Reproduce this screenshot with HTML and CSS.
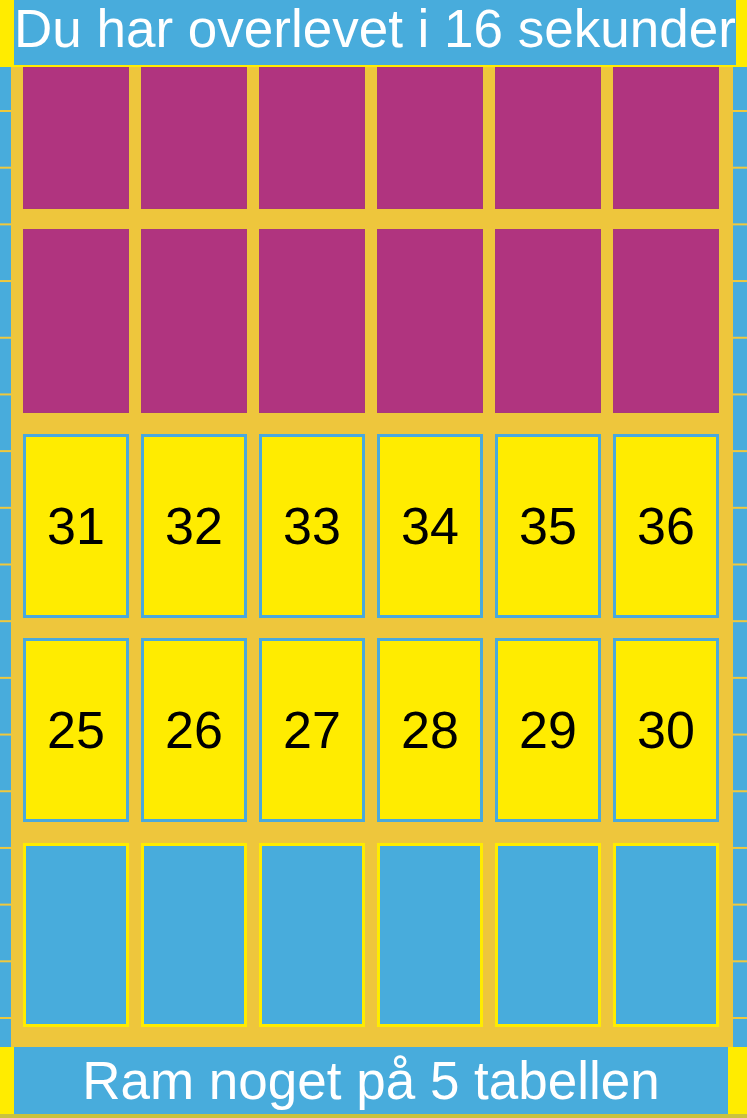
FILE: index.html
```html
<!DOCTYPE html>
<html lang="da">
<head>
<meta charset="utf-8">
<title>Tabel spil</title>
<link rel="stylesheet" href="styles.css">
</head>
<body>
<div class="page">
  <header class="bar bar-top">
    <div class="edge edge-left"></div>
    <div class="bar-body"><span class="bar-text">Du har overlevet i 16 sekunder</span></div>
    <div class="edge edge-right"></div>
  </header>
  <main class="middle">
    <div class="side"></div>
    <div class="board">
      <div class="cell cell-hidden"></div>
      <div class="cell cell-hidden"></div>
      <div class="cell cell-hidden"></div>
      <div class="cell cell-hidden"></div>
      <div class="cell cell-hidden"></div>
      <div class="cell cell-hidden"></div>

      <div class="cell cell-hidden"></div>
      <div class="cell cell-hidden"></div>
      <div class="cell cell-hidden"></div>
      <div class="cell cell-hidden"></div>
      <div class="cell cell-hidden"></div>
      <div class="cell cell-hidden"></div>

      <div class="cell cell-num">31</div>
      <div class="cell cell-num">32</div>
      <div class="cell cell-num">33</div>
      <div class="cell cell-num">34</div>
      <div class="cell cell-num">35</div>
      <div class="cell cell-num">36</div>

      <div class="cell cell-num">25</div>
      <div class="cell cell-num">26</div>
      <div class="cell cell-num">27</div>
      <div class="cell cell-num">28</div>
      <div class="cell cell-num">29</div>
      <div class="cell cell-num">30</div>

      <div class="cell cell-blue"></div>
      <div class="cell cell-blue"></div>
      <div class="cell cell-blue"></div>
      <div class="cell cell-blue"></div>
      <div class="cell cell-blue"></div>
      <div class="cell cell-blue"></div>
    </div>
    <div class="side"></div>
  </main>
  <footer class="bar bar-bottom">
    <div class="edge edge-left"></div>
    <div class="bar-body"><span class="bar-text">Ram noget på 5 tabellen</span></div>
    <div class="edge edge-right"></div>
  </footer>
</div>
</body>
</html>
```

FILE: styles.css
```css
* { box-sizing: border-box; }

html, body {
  margin: 0;
  padding: 0;
  background: #48acdc;
}

.page {
  width: 747px;
  height: 1118px;
  overflow: hidden;
  display: flex;
  flex-direction: column;
  font-family: "Liberation Sans", Arial, sans-serif;
}

.bar {
  display: flex;
  flex: none;
}

.bar-top {
  height: 67px;
  border-bottom: 2px solid #ffec00;
}

.bar-top .bar-body {
  padding-bottom: 8px;
}

.bar-bottom {
  height: 71px;
  border-bottom: 4px solid #c9c23e;
}

.edge {
  flex: none;
  background: #ffec00;
}

.edge-left { width: 14px; }
.edge-right { width: 19px; }

.bar-body {
  flex: 1;
  background: #48acdc;
  display: flex;
  align-items: center;
  justify-content: center;
  overflow: visible;
  position: relative;
  z-index: 1;
}

.bar-text {
  color: #ffffff;
  font-size: 53px;
  line-height: 1;
  white-space: nowrap;
}

.middle {
  flex: 1;
  display: grid;
  grid-template-columns: 11px 1fr 14px;
}

.side {
  background-color: #48acdc;
  background-image: linear-gradient(to bottom, #f0c93c 0, #f0c93c 2px, transparent 2px);
  background-size: 100% 56.7px;
  background-position: 0 43px;
  background-repeat: repeat-y;
}

.board {
  background: #eec63c;
  padding: 0 14px 20.5px 12px;
  display: grid;
  grid-template-columns: repeat(6, 106px);
  grid-template-rows: 141.5px repeat(4, 184px);
  column-gap: 12px;
  row-gap: 20.5px;
}

.cell {
  display: flex;
  align-items: center;
  justify-content: center;
}

.cell-hidden {
  background: #b0347f;
  border: 1px solid #a8397a;
}

.cell-num {
  background: #ffec00;
  border: 3px solid #4aa9dc;
  color: #000000;
  font-size: 52px;
}

.cell-blue {
  background: #48acdc;
  border: 3px solid #ffec00;
}
```
